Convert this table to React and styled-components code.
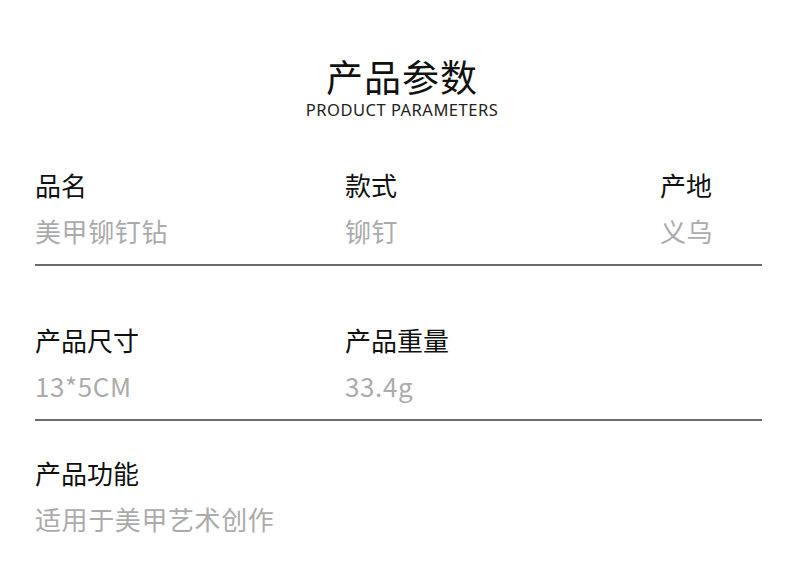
import React from "react";
import styled, { createGlobalStyle } from "styled-components";

const GlobalStyle = createGlobalStyle`
    body {
        margin: 0;
        background: #ffffff;
        font-family: "Noto Sans CJK SC", "Noto Sans", sans-serif;
    }
`

const rows = [
    [
        { label: "品名", value: "美甲铆钉钻" },
        { label: "款式", value: "铆钉" },
        { label: "产地", value: "义乌" },
    ],
    [
        { label: "产品尺寸", value: "13*5CM" },
        { label: "产品重量", value: "33.4g" },
    ],
    [
        { label: "产品功能", value: "适用于美甲艺术创作" },
    ],
]

const Params = () => {
    return(
        <ParamsContainer>
            <GlobalStyle />
            <Header>
                <h1>产品参数</h1>
                <p>PRODUCT PARAMETERS</p>
            </Header>
            {rows.map((row, i) => (
                <Row key={i} $last={i === rows.length - 1} $gap={i === 0 ? 56 : 34}>
                    {row.map((item) => (
                        <Cell key={item.label}>
                            <Label>{item.label}</Label>
                            <Value>{item.value}</Value>
                        </Cell>
                    ))}
                </Row>
            ))}
        </ParamsContainer>
    )
}

const ParamsContainer = styled.section`
    width: 800px;
    height: 580px;
    box-sizing: border-box;
    padding: 54px 38px 0 35px;
    overflow: hidden;
`

const Header = styled.header`
    display: flex;
    flex-direction: column;
    align-items: center;
    margin-left: 7px;
    margin-bottom: 47px;
    h1 {
        margin: 0;
        font-size: 37px;
        line-height: 45px;
        font-weight: 400;
        letter-spacing: 1px;
        color: #111;
    }
    p {
        margin: 1px 0 0;
        font-family: "Noto Sans", sans-serif;
        font-size: 16.5px;
        line-height: 20px;
        letter-spacing: 0.5px;
        color: #222;
    }
`

const Row = styled.div`
    display: grid;
    grid-template-columns: 310px 315px 1fr;
    padding-bottom: 15px;
    margin-bottom: ${p => p.$gap}px;
    border-bottom: ${p => p.$last ? "none" : "2px solid #6b6b6b"};
`

const Cell = styled.div`
    display: flex;
    flex-direction: column;
    gap: 10px;
`

const Label = styled.span`
    font-size: 26px;
    line-height: 36px;
    color: #111;
`

const Value = styled.span`
    font-size: 26px;
    line-height: 36px;
    letter-spacing: 0.6px;
    color: #ababab;
`

export default Params
